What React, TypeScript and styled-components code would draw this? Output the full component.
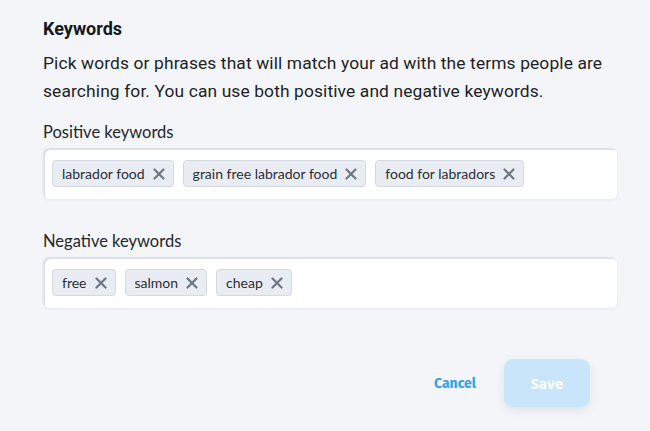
import React from "react";
import styled, { createGlobalStyle } from "styled-components";

const Global = createGlobalStyle`
  html, body { margin: 0; padding: 0; background: #f4f5f9; }
  * { box-sizing: border-box; }
`;

const Page = styled.div`
  width: 650px;
  height: 431px;
  background: #f4f5f9;
  padding: 17px 33px 0 43px;
  display: flex;
  flex-direction: column;
`;

const Title = styled.h2`
  margin: 0;
  font-family: Roboto, "Liberation Sans", sans-serif;
  font-weight: 700;
  font-size: 18px;
  line-height: 24px;
  color: #16181d;
`;

const Intro = styled.p`
  margin: 8px 0 0;
  font-family: Roboto, "Liberation Sans", sans-serif;
  font-size: 17.4px;
  line-height: 28px;
  color: #1c1f24;
  letter-spacing: 0.12px;
`;

const Field = styled.div<{ $top: number }>`
  margin-top: ${(p) => p.$top}px;
  display: flex;
  flex-direction: column;
`;

const Label = styled.label`
  font-family: Lato, "Open Sans", sans-serif;
  font-size: 16.5px;
  line-height: 20px;
  color: #23262b;
  margin-bottom: 6px;
`;

const TagBox = styled.div`
  background: #ffffff;
  border-radius: 6px;
  height: 51px;
  padding: 0 9px;
  display: flex;
  align-items: center;
  gap: 9px;
  box-shadow: inset 2px 2px 0 #dde2ea, 0 1px 3px rgba(40, 50, 70, 0.06);
`;

const Chip = styled.span`
  display: inline-flex;
  align-items: center;
  gap: 8px;
  height: 27px;
  padding: 0 8px 0 9px;
  background: #e9edf3;
  border: 1px solid #d3d9e1;
  border-radius: 4px;
  font-family: Lato, "Open Sans", sans-serif;
  font-size: 14px;
  color: #2a2d33;
`;

const Remove = styled.svg`
  width: 12px;
  height: 12px;
  flex: none;
`;

const Actions = styled.div`
  margin-top: 51px;
  display: flex;
  justify-content: flex-end;
  align-items: center;
  gap: 28px;
  padding-right: 27px;
`;

const CancelButton = styled.button`
  border: none;
  background: none;
  padding: 0;
  font-family: "Fira Sans", "Open Sans", sans-serif;
  font-weight: 700;
  font-size: 14px;
  color: #31a3ee;
  cursor: pointer;
`;

const SaveButton = styled.button`
  width: 86px;
  height: 48px;
  border: none;
  border-radius: 9px;
  background: #c9e5fa;
  color: #ffffff;
  font-family: "Open Sans", sans-serif;
  font-weight: 700;
  font-size: 14px;
  box-shadow: 0 4px 10px rgba(60, 80, 110, 0.1);
`;

const X = () => (
  <Remove viewBox="0 0 12 12">
    <path d="M1.5 1.5 L10.5 10.5 M10.5 1.5 L1.5 10.5" stroke="#6c7784" strokeWidth="2.2" strokeLinecap="round" />
  </Remove>
);

const TagField = ({ label, tags, top }: { label: string; tags: string[]; top: number }) => (
  <Field $top={top}>
    <Label>{label}</Label>
    <TagBox>
      {tags.map((t) => (
        <Chip key={t}>
          {t}
          <X />
        </Chip>
      ))}
    </TagBox>
  </Field>
);

export default function App() {
  return (
    <>
      <Global />
      <Page>
        <Title>Keywords</Title>
        <Intro>
          Pick words or phrases that will match your ad with the terms people are searching for. You can use both
          positive and negative keywords.
        </Intro>
        <TagField
          top={17}
          label="Positive keywords"
          tags={["labrador food", "grain free labrador food", "food for labradors"]}
        />
        <TagField top={32} label="Negative keywords" tags={["free", "salmon", "cheap"]} />
        <Actions>
          <CancelButton>Cancel</CancelButton>
          <SaveButton>Save</SaveButton>
        </Actions>
      </Page>
    </>
  );
}
